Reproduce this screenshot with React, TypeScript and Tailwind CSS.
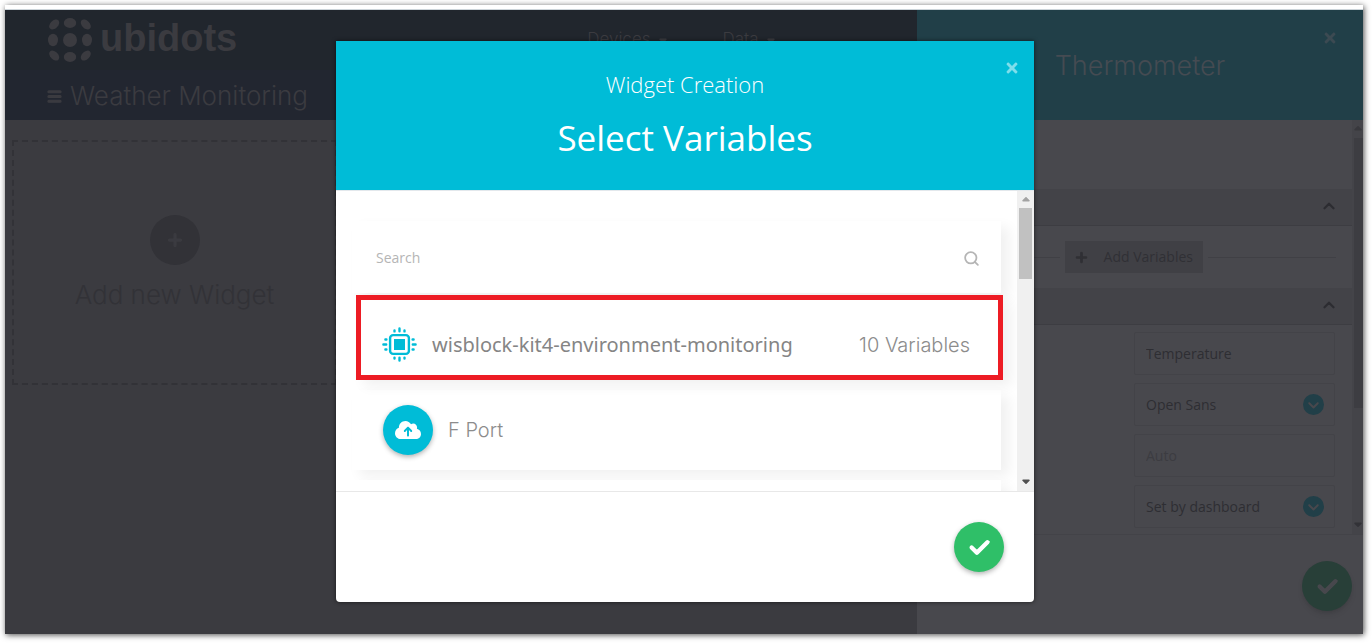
import React from "react";
import { ChevronUp, Search } from "lucide-react";
import { FaTimes } from "react-icons/fa";
import {
  FaBars,
  FaCaretDown,
  FaCaretUp,
  FaCheck,
  FaCircleChevronDown,
  FaCloudArrowUp,
  FaPlus,
} from "react-icons/fa6";

function LogoMark() {
  return (
    <svg viewBox="0 0 44 44" className="size-11" fill="currentColor" aria-hidden="true">
      <circle cx="22" cy="22" r="7" />
      <ellipse cx="22" cy="5" rx="6.2" ry="5" />
      <ellipse cx="22" cy="39" rx="6.2" ry="5" />
      <ellipse cx="5" cy="22" rx="5" ry="6.2" />
      <ellipse cx="39" cy="22" rx="5" ry="6.2" />
      <ellipse cx="6.2" cy="6.4" rx="5.9" ry="3.9" transform="rotate(-45 6.2 6.4)" />
      <ellipse cx="37.8" cy="6.4" rx="5.9" ry="3.9" transform="rotate(45 37.8 6.4)" />
      <ellipse cx="6.2" cy="37.6" rx="5.9" ry="3.9" transform="rotate(45 6.2 37.6)" />
      <ellipse cx="37.8" cy="37.6" rx="5.9" ry="3.9" transform="rotate(-45 37.8 37.6)" />
    </svg>
  );
}

function ChipIcon() {
  return (
    <svg
      viewBox="0 0 35 35"
      className="size-[35px] shrink-0 text-[#00bcd7]"
      fill="none"
      stroke="currentColor"
      strokeWidth="2.4"
      strokeLinecap="round"
      aria-hidden="true"
    >
      <rect x="8.1" y="8.1" width="18.8" height="18.8" rx="3" />
      <rect x="12" y="12" width="11" height="11" fill="currentColor" stroke="none" />
      <path d="M17.5 1.4v2.8M12.5 3.4v1M22.5 3.4v1M17.5 30.8v2.8M12.5 30.6v1M22.5 30.6v1" />
      <path d="M1.4 17.5h2.8M3.4 12.5h1M3.4 22.5h1M30.8 17.5h2.8M30.6 12.5h1M30.6 22.5h1" />
    </svg>
  );
}

function SectionBar({ label }: { label: string }) {
  return (
    <button
      type="button"
      aria-label={label}
      className="flex h-[37px] w-full items-center justify-end border-b border-[#3d3d42] bg-[#434348] pr-3.5 pb-0.5 text-[#2c2c31]"
    >
      <ChevronUp size={18} strokeWidth={3} />
    </button>
  );
}

const fieldBox =
  "h-[43px] w-full appearance-none rounded-xs border border-[#434348] bg-transparent px-[11px] text-sm text-[#2e2e33] placeholder:text-[#3c3c41]";

function SelectField({ label, value }: { label: string; value: string }) {
  return (
    <div className="relative">
      <select aria-label={label} className={fieldBox} defaultValue={value}>
        <option>{value}</option>
      </select>
      <span className="pointer-events-none absolute top-[11px] right-[11px] text-[#213f48]">
        <FaCircleChevronDown size={21} />
      </span>
    </div>
  );
}

function Dashboard() {
  return (
    <div className="flex min-w-0 flex-1 flex-col">
      <header className="text-[#3b3b40]">
        <div className="flex h-[60px] items-center bg-[#21262d] pl-[43px]">
          <a href="#home" className="flex items-center gap-2">
            <LogoMark />
            <span className="pb-1 font-['Liberation_Sans',sans-serif] text-[38px] leading-none font-bold">
              ubidots
            </span>
          </a>
          <nav className="ml-[350px] flex gap-[54px] font-['Inter',sans-serif] text-[17px] font-light">
            <button type="button" className="flex items-center gap-1.5">
              Devices <FaCaretDown size={12} />
            </button>
            <button type="button" className="flex items-center gap-1.5">
              Data <FaCaretDown size={12} />
            </button>
          </nav>
        </div>
        <div className="flex h-[50px] items-center gap-2 bg-[#222630] pt-0.5 pl-[42px]">
          <button type="button" aria-label="Open menu">
            <FaBars size={15} stroke="currentColor" strokeWidth={40} />
          </button>
          <h1 className="font-['Inter',sans-serif] text-[26px] leading-8 font-light">Weather Monitoring</h1>
        </div>
      </header>
      <main className="flex-1 bg-[#3b3b40] px-[7px] pt-5">
        <button
          type="button"
          className="flex h-[245px] w-[325px] flex-col items-center justify-center gap-3.5 border-2 border-dashed border-[#323237] text-[#323237]"
        >
          <span className="flex size-[50px] items-center justify-center rounded-full bg-[#323237] text-[#3b3b40]">
            <FaPlus size={16} stroke="currentColor" strokeWidth={40} />
          </span>
          <span className="font-['Inter',sans-serif] text-[26px] leading-8 font-light">Add new Widget</span>
        </button>
      </main>
    </div>
  );
}

function SettingsPanel() {
  return (
    <aside className="flex w-[446px] shrink-0 flex-col bg-[#48484d]">
      <header className="relative flex h-[110px] items-center justify-center bg-[#213f48] pt-0.5 text-[#454b52]">
        <h2 className="font-['Inter',sans-serif] text-[27px] leading-8 font-light">Thermometer</h2>
        <button type="button" aria-label="Close panel" className="absolute top-5 right-[25px] text-[#3c4a52]">
          <FaTimes size={16} />
        </button>
      </header>
      <div className="flex border-b border-[#434348]">
        <div className="min-w-0 flex-1 pt-[69px]">
          <SectionBar label="Data" />
          <div className="flex items-center gap-[5px] py-[15px] pr-4 pl-6">
            <span className="h-px flex-1 bg-[#404045]" />
            <button
              type="button"
              className="flex h-8 items-center gap-4 bg-[#404045] px-2.5 text-sm text-[#303035]"
            >
              <FaPlus size={13} stroke="currentColor" strokeWidth={40} />
              Add Variables
            </button>
            <span className="h-px w-32 bg-[#404045]" />
          </div>
          <SectionBar label="Appearance" />
          <div className="ml-auto flex w-[218px] flex-col gap-2 pt-[7px] pr-[17px] pb-1.5">
            <input aria-label="Name" className={fieldBox} defaultValue="Temperature" />
            <SelectField label="Font" value="Open Sans" />
            <input aria-label="Font size" className={fieldBox} placeholder="Auto" />
            <SelectField label="Color" value="Set by dashboard" />
          </div>
        </div>
        <div className="flex w-[11px] flex-col items-center bg-[#444449] text-[#323237]">
          <FaCaretUp size={12} className="my-[3px] text-[#38383d]" />
          <div className="h-[270px] w-[9px] self-end bg-[#3d3d42]" />
          <FaCaretDown size={12} className="mt-auto mb-1" />
        </div>
      </div>
      <div className="flex justify-end pt-[26px] pr-[11px]">
        <button
          type="button"
          aria-label="Save widget"
          className="flex size-[50px] items-center justify-center rounded-full bg-[#283f38] text-[#48484d] shadow-md"
        >
          <FaCheck size={21} stroke="currentColor" strokeWidth={40} />
        </button>
      </div>
    </aside>
  );
}

function VariablesDialog() {
  return (
    <section
      role="dialog"
      aria-labelledby="dialog-title"
      className="flex w-[698px] flex-col overflow-hidden rounded-b-sm bg-white shadow-[0_0_4px_rgba(0,0,0,0.6)]"
    >
      <header className="relative flex h-[149px] flex-col items-center bg-[#00bcd7] pt-[27px] text-white">
        <p className="text-[22px] leading-8 font-light">Widget Creation</p>
        <h2 id="dialog-title" className="pt-3.5 text-[35px] leading-12">
          Select Variables
        </h2>
        <button type="button" aria-label="Close" className="absolute top-[19px] right-3.5 text-[#7fdeeb]">
          <FaTimes size={16} />
        </button>
      </header>

      <div className="flex h-[301px] border-t border-[#e3e8ec]">
        <div className="flex min-w-0 flex-1 flex-col overflow-hidden pt-[30px] pr-4 pl-4">
          <label className="flex h-[72px] shrink-0 items-center bg-white pt-0.5 pr-[21px] pl-6 text-[#b5b5b5] shadow-[8px_6px_12px_rgba(0,0,0,0.06)]">
            <input
              type="search"
              aria-label="Search"
              placeholder="Search"
              className="min-w-0 flex-1 text-sm outline-none placeholder:text-[#b5b5b5]"
            />
            <Search size={17} strokeWidth={2.5} />
          </label>

          <button
            type="button"
            className="z-10 mt-0.5 -mr-0.5 ml-1 flex h-[85px] shrink-0 items-center border-5 border-[#ed1c24] bg-white pt-3.5 pr-7 pl-[21px] text-left text-[#858585] shadow-[8px_6px_12px_rgba(0,0,0,0.06)]"
          >
            <ChipIcon />
            <span className="ml-[15px] flex-1 font-['Noto_Sans',sans-serif] text-xl">
              wisblock-kit4-environment-monitoring
            </span>
            <span className="font-['Inter',sans-serif] text-xl font-light text-[#8c8c8c]">10 Variables</span>
          </button>

          <button
            type="button"
            className="mt-2.5 flex h-20 shrink-0 items-center gap-[15px] bg-white pl-[31px] text-left shadow-[8px_6px_12px_rgba(0,0,0,0.06)]"
          >
            <span className="flex size-[50px] items-center justify-center rounded-full bg-[#00bcd7] text-white shadow-[0_2px_5px_rgba(0,0,0,0.3)]">
              <FaCloudArrowUp size={26} />
            </span>
            <span className="font-['Inter',sans-serif] text-xl font-light text-[#8c8c8c]">F Port</span>
          </button>

          <div className="mt-2.5 h-20 shrink-0 bg-white shadow-[8px_6px_12px_rgba(0,0,0,0.06)]" />
        </div>
        <div className="flex w-[17px] shrink-0 flex-col items-center bg-[#f0f0f0]">
          <FaCaretUp size={12} className="mt-[3px] mb-0.5 text-[#a3a3a3]" />
          <div className="h-[71px] w-[13px] bg-[#c1c1c1]" />
          <FaCaretDown size={12} className="mt-auto mb-1 text-[#505050]" />
        </div>
      </div>

      <footer className="flex h-[111px] items-center justify-end border-t border-[#e8e8e8] pr-[30px]">
        <button
          type="button"
          aria-label="Confirm selection"
          className="flex size-[50px] items-center justify-center rounded-full bg-[#2fbf68] text-white shadow-[0_2px_5px_rgba(0,0,0,0.3)]"
        >
          <FaCheck size={21} stroke="currentColor" strokeWidth={40} />
        </button>
      </footer>
    </section>
  );
}

export default function App() {
  return (
    <div className="flex min-h-screen bg-white pt-[5px] pr-[9px] pb-[9px] pl-[5px] font-['Open_Sans',sans-serif]">
      <div className="relative flex min-w-0 flex-1 border-t-4 border-white shadow-[1px_1px_6px_rgba(0,0,0,0.7)]">
        <div className="flex min-w-0 flex-1 border-t border-[#cdd5da]">
          <Dashboard />
          <SettingsPanel />
        </div>
        <div className="absolute inset-0 flex items-start justify-center pt-8 pl-0.5">
          <VariablesDialog />
        </div>
      </div>
    </div>
  );
}
